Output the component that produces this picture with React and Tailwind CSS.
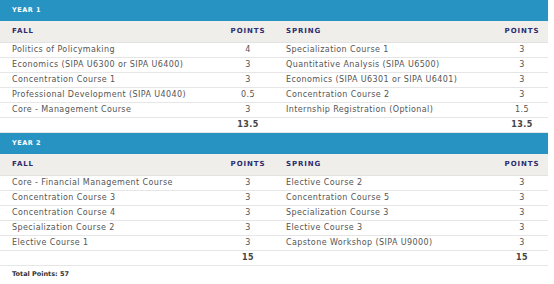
const years = [
  {
    title: "YEAR 1",
    fall: [
      ["Politics of Policymaking", "4"],
      ["Economics (SIPA U6300 or SIPA U6400)", "3"],
      ["Concentration Course 1", "3"],
      ["Professional Development (SIPA U4040)", "0.5"],
      ["Core - Management Course", "3"],
    ],
    spring: [
      ["Specialization Course 1", "3"],
      ["Quantitative Analysis (SIPA U6500)", "3"],
      ["Economics (SIPA U6301 or SIPA U6401)", "3"],
      ["Concentration Course 2", "3"],
      ["Internship Registration (Optional)", "1.5"],
    ],
    fallTotal: "13.5",
    springTotal: "13.5",
  },
  {
    title: "YEAR 2",
    fall: [
      ["Core - Financial Management Course", "3"],
      ["Concentration Course 3", "3"],
      ["Concentration Course 4", "3"],
      ["Specialization Course 2", "3"],
      ["Elective Course 1", "3"],
    ],
    spring: [
      ["Elective Course 2", "3"],
      ["Concentration Course 5", "3"],
      ["Specialization Course 3", "3"],
      ["Elective Course 3", "3"],
      ["Capstone Workshop (SIPA U9000)", "3"],
    ],
    fallTotal: "15",
    springTotal: "15",
  },
];

const YearTable = ({ year }) => {
  return (
    <div className="w-[548px]">
      <div className="h-[21px] bg-[#2793c2] flex items-center px-[12px] text-white font-bold text-[6.5px] tracking-[0.5px]">
        {year.title}
      </div>
      <div className="grid grid-cols-[222px_52px_222px_52px] h-[22px] items-center bg-[#efeeea] text-[#2d2b6e] font-bold text-[7px] tracking-[0.9px] border-b border-[#e2e2e2]">
        <div className="pl-[12px]">FALL</div>
        <div className="text-center">POINTS</div>
        <div className="pl-[12px]">SPRING</div>
        <div className="text-center">POINTS</div>
      </div>
      {year.fall.map((row, i) => (
        <div
          key={i}
          className="grid grid-cols-[222px_52px_222px_52px] h-[15px] items-center border-b border-[#e6e6e6] text-[8px] tracking-[0.4px] text-[#555]"
        >
          <div className="pl-[12px] whitespace-nowrap">{row[0]}</div>
          <div className="text-center">{row[1]}</div>
          <div className="pl-[12px] whitespace-nowrap">{year.spring[i][0]}</div>
          <div className="text-center">{year.spring[i][1]}</div>
        </div>
      ))}
      <div className="grid grid-cols-[222px_52px_222px_52px] h-[15px] items-center border-b border-[#e6e6e6] text-[8px] tracking-[0.4px] font-bold text-[#444]">
        <div />
        <div className="text-center">{year.fallTotal}</div>
        <div />
        <div className="text-center">{year.springTotal}</div>
      </div>
    </div>
  );
}

export default function App() {
  return (
    <div className="w-[554px] h-[284px] bg-white overflow-hidden font-['DejaVu_Sans',sans-serif]">
      {years.map((y) => (
        <YearTable key={y.title} year={y} />
      ))}
      <div className="pl-[12px] pt-[4px] text-[6.5px] font-bold text-[#333]">
        Total Points: 57
      </div>
    </div>
  );
}
